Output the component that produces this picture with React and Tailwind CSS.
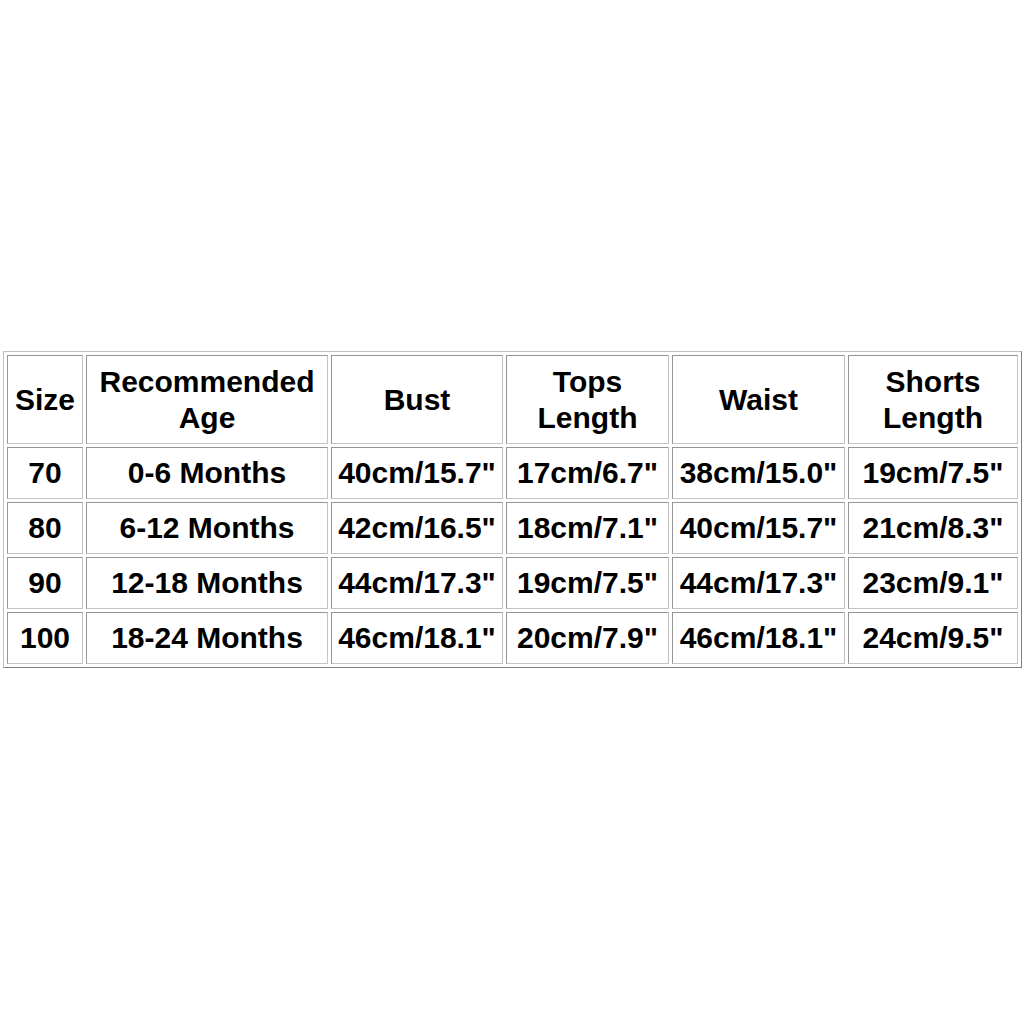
export default function App() {
  const widths = ["w-[76px]", "w-[242px]", "w-[172px]", "w-[163px]", "w-[173px]", "w-[170px]"];
  const header = [
    ["Size"],
    ["Recommended", "Age"],
    ["Bust"],
    ["Tops", "Length"],
    ["Waist"],
    ["Shorts", "Length"],
  ];
  const rows = [
    ["70", "0-6 Months", '40cm/15.7"', '17cm/6.7"', '38cm/15.0"', '19cm/7.5"'],
    ["80", "6-12 Months", '42cm/16.5"', '18cm/7.1"', '40cm/15.7"', '21cm/8.3"'],
    ["90", "12-18 Months", '44cm/17.3"', '19cm/7.5"', '44cm/17.3"', '23cm/9.1"'],
    ["100", "18-24 Months", '46cm/18.1"', '20cm/7.9"', '46cm/18.1"', '24cm/9.5"'],
  ];
  const cell =
    "p-0 text-center align-middle border border-t-[#959595] border-l-[#959595] border-b-[#c4c4c4] border-r-[#c4c4c4] whitespace-nowrap";
  return (
    <div className="w-[1024px] h-[1024px] bg-white pt-[351px] pl-[3px] font-['Liberation_Sans',Arial,sans-serif] font-bold text-black text-[30px]">
      <table className="table-fixed w-[1019px] border-separate border-spacing-[3px] border border-t-[#c0c0c0] border-l-[#c0c0c0] border-b-[#808080] border-r-[#808080]">
        <tbody>
          <tr className="h-[89px]">
            {header.map((h, i) => (
              <td key={i} className={`${cell} ${widths[i]} h-[89px] leading-[36px]`}>
                {h.map((line, j) => (
                  <div key={j}>{line}</div>
                ))}
              </td>
            ))}
          </tr>
          {rows.map((r, ri) => (
            <tr key={ri} className="h-[52px]">
              {r.map((c, ci) => (
                <td key={ci} className={`${cell} h-[52px] leading-[36px]`}>
                  {c}
                </td>
              ))}
            </tr>
          ))}
        </tbody>
      </table>
    </div>
  );
}
